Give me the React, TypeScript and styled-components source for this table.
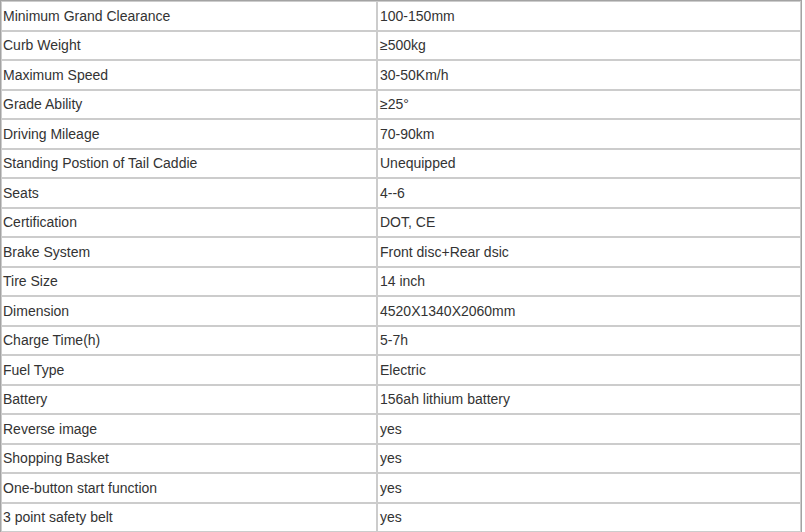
import React from "react";
import styled, { createGlobalStyle } from "styled-components";

const GlobalStyle = createGlobalStyle`
  html, body {
    margin: 0;
    padding: 0;
    background: #ffffff;
  }
`;

const Table = styled.table`
  width: 802px;
  border-collapse: separate;
  border-spacing: 0;
  border: 1px solid #a3a3a3;
  font-family: "Liberation Sans", Arial, sans-serif;
  font-size: 14px;
  color: #333333;
  table-layout: fixed;
`;

const Row = styled.tr`
  height: 29.5px;
`;

const Cell = styled.td<{ $wide?: boolean }>`
  border: 1px solid #cccccc;
  padding: 0 0 0 ${(p) => (p.$wide ? "2px" : "1px")};
  vertical-align: middle;
  white-space: nowrap;
  width: ${(p) => (p.$wide ? "auto" : "376px")};
  box-sizing: border-box;
`;

const rows: [string, string][] = [
  ["Minimum Grand Clearance", "100-150mm"],
  ["Curb Weight", "≥500kg"],
  ["Maximum Speed", "30-50Km/h"],
  ["Grade Ability", "≥25°"],
  ["Driving Mileage", "70-90km"],
  ["Standing Postion of Tail Caddie", "Unequipped"],
  ["Seats", "4--6"],
  ["Certification", "DOT, CE"],
  ["Brake System", "Front disc+Rear dsic"],
  ["Tire Size", "14 inch"],
  ["Dimension", "4520X1340X2060mm"],
  ["Charge Time(h)", "5-7h"],
  ["Fuel Type", "Electric"],
  ["Battery", "156ah lithium battery"],
  ["Reverse image", "yes"],
  ["Shopping Basket", "yes"],
  ["One-button start function", "yes"],
  ["3 point safety belt", "yes"],
];

export default function App() {
  return (
    <>
      <GlobalStyle />
      <Table>
        <tbody>
          {rows.map(([k, v]) => (
            <Row key={k}>
              <Cell>{k}</Cell>
              <Cell $wide>{v}</Cell>
            </Row>
          ))}
        </tbody>
      </Table>
    </>
  );
}
